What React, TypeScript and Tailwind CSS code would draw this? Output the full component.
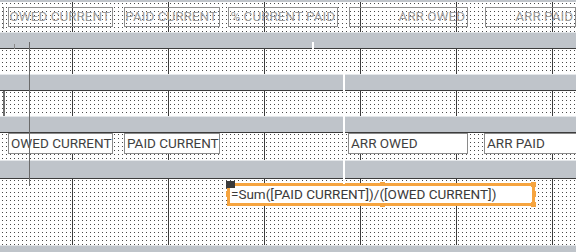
const grid =
  "bg-white bg-[linear-gradient(to_right,#3c3c3c_1px,transparent_1px),radial-gradient(circle_at_0.5px_0.5px,#4a4a4a_0.6px,transparent_0.7px)] bg-[length:96px_100%,4px_4px] bg-[position:72px_0,2px_1px]";

const band = "bg-[#bfc4ca] border-t border-[#e4e7ea] shrink-0";

function HeaderLabel({ text, w, ml }: { text: string; w: number; ml: number }) {
  return (
    <div
      className="flex h-[20px] shrink-0 items-center justify-end border border-[#8e8e8e] pr-[2px] text-[13.5px] leading-none text-[#9c9c9c]"
      style={{ width: w, marginLeft: ml }}
    >
      {text}
    </div>
  );
}

function FieldBox({ text, w, ml }: { text: string; w: number; ml: number }) {
  return (
    <div
      className="flex h-[21px] shrink-0 items-center border border-[#8a8a8a] bg-white pl-[2px] text-[13.5px] leading-none text-[#3f3f3f]"
      style={{ width: w, marginLeft: ml }}
    >
      {text}
    </div>
  );
}

export default function App() {
  return (
    <div className="relative h-[252px] w-[576px] overflow-hidden bg-[#bfc4ca] font-['Roboto',sans-serif]">
      <div className="flex flex-col">
        <div className="h-[2px] bg-[#bfc4ca]" />

        {/* Page header */}
        <div className={`${grid} flex h-[30px] items-start pt-[5px]`}>
          <div className="h-[22px] w-[4px] shrink-0 border-r border-[#8e8e8e]" />
          <HeaderLabel text="OWED CURRENT" w={105} ml={4} />
          <HeaderLabel text="PAID CURRENT" w={96} ml={11} />
          <HeaderLabel text="% CURRENT PAID" w={110} ml={8} />
          <HeaderLabel text="ARR OWED" w={119} ml={11} />
          <HeaderLabel text="ARR PAID" w={91} ml={17} />
        </div>

        <div className={`${band} h-[16px]`} />
        <div className={`${grid} h-[26px] border-t border-[#3c3c3c]`} />
        <div className={`${band} h-[16px]`} />
        <div className={`${grid} h-[26px] border-t border-[#3c3c3c]`}>
          <div className="ml-[3px] h-full w-[2px] bg-[#6e6e6e]" />
        </div>
        <div className={`${band} h-[16px]`} />

        {/* Detail */}
        <div className={`${grid} flex h-[28px] items-start border-t border-[#3c3c3c]`}>
          <FieldBox text="OWED CURRENT" w={105} ml={8} />
          <FieldBox text="PAID CURRENT" w={96} ml={11} />
          <FieldBox text="ARR OWED" w={120} ml={128} />
          <FieldBox text="ARR PAID" w={100} ml={16} />
        </div>

        <div className={`${band} h-[18px]`} />

        {/* Footer with selected formula control */}
        <div className={`${grid} h-[67px] border-t border-[#3c3c3c] pl-[227px] pt-[4px]`}>
          <div className="relative flex h-[23px] w-[308px] items-center border-[3px] border-[#f6a540] bg-white pl-[1px] text-[13.5px] leading-none text-[#3a3a3a]">
            =Sum([PAID CURRENT])/([OWED CURRENT])
            <span className="absolute -left-[4px] -top-[5px] h-[7px] w-[9px] bg-[#3a3a3a]" />
            <span className="absolute left-[150px] -top-[4px] h-[4px] w-[5px] bg-[#f6a540]" />
            <span className="absolute left-[150px] -bottom-[4px] h-[4px] w-[5px] bg-[#f6a540]" />
            <span className="absolute -left-[4px] top-[5px] h-[6px] w-[4px] bg-[#f6a540]" />
            <span className="absolute -right-[4px] -top-[4px] h-[5px] w-[5px] bg-[#f6a540]" />
            <span className="absolute -right-[4px] top-[5px] h-[6px] w-[4px] bg-[#f6a540]" />
            <span className="absolute -right-[4px] -bottom-[4px] h-[5px] w-[5px] bg-[#f6a540]" />
          </div>
        </div>

        <div className={`${band} h-[8px]`} />
      </div>

      {/* guide lines laid over the design surface */}
      <div className="absolute left-[29px] top-[42px] h-[144px] w-px bg-[#6a6a6a]" />
      <div className="absolute left-[14px] top-[44px] h-[5px] w-px bg-[#8a8a8a]" />
      <div className="absolute left-[312px] top-[42px] h-[32px] w-[2px] bg-white" />
      <div className="absolute left-[343px] top-[74px] h-[110px] w-[2px] bg-white" />
    </div>
  );
}
